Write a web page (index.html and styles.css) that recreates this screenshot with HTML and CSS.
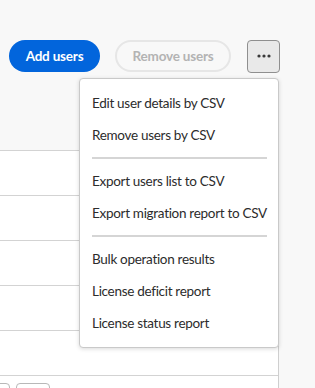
FILE: index.html
```html
<!DOCTYPE html>
<html>
<head>
  <title>Users</title>
  <link rel="stylesheet" href="styles.css">
</head>
<body>
  <div class="page">
    <!-- Toolbar -->
    <div class="toolbar">
      <button class="btn btn-primary">Add users</button>
      <button class="btn btn-secondary" disabled>Remove users</button>
      <button class="btn-more" aria-label="More actions">
        <svg width="14" height="4" viewBox="0 0 14 4"><circle cx="2" cy="2" r="1.6"/><circle cx="7" cy="2" r="1.6"/><circle cx="12" cy="2" r="1.6"/></svg>
      </button>
    </div>

    <!-- Users table -->
    <div class="table">
      <div class="table-row"></div>
      <div class="table-row"></div>
      <div class="table-row"></div>
      <div class="table-row"></div>
      <div class="table-row"></div>
      <div class="table-foot">
        <span class="page-box page-box-first"></span>
        <span class="page-box"></span>
      </div>
    </div>

    <!-- Actions menu -->
    <ul class="menu">
      <li class="menu-item">Edit user details by CSV</li>
      <li class="menu-item">Remove users by CSV</li>
      <li class="menu-divider"></li>
      <li class="menu-item">Export users list to CSV</li>
      <li class="menu-item">Export migration report to CSV</li>
      <li class="menu-divider"></li>
      <li class="menu-item">Bulk operation results</li>
      <li class="menu-item">License deficit report</li>
      <li class="menu-item">License status report</li>
    </ul>
  </div>
</body>
</html>
```

FILE: styles.css
```css
body {
  margin: 0;
  background: #f8f8f8;
  font-family: Lato, "Liberation Sans", sans-serif;
  color: #2c2c2c;
}

.page {
  position: relative;
  height: 388px;
  overflow: hidden;
}

.toolbar {
  display: flex;
  align-items: center;
  padding: 40px 0 0 9px;
  height: 32px;
}

.btn {
  height: 32px;
  padding: 0;
  border-radius: 16px;
  font-family: inherit;
  font-size: 13.5px;
  font-weight: bold;
  letter-spacing: -0.2px;
  white-space: nowrap;
  box-sizing: border-box;
}

.btn-primary {
  background: #0265dc;
  border: none;
  color: white;
  width: 91px;
}

.btn-secondary {
  margin-left: 15px;
  width: 116px;
  background: transparent;
  border: 2px solid #e6e6e6;
  color: #b3b3b3;
}

.btn-more {
  margin-left: 16px;
  width: 33px;
  height: 33px;
  display: flex;
  align-items: center;
  justify-content: center;
  background: #e9e9e9;
  border: 1px solid #8f8f8f;
  border-radius: 4px;
  box-sizing: border-box;
  padding: 0;
}

.btn-more svg {
  fill: #3a3a3a;
}

.table {
  width: 279px;
  margin-top: 78px;
  border-right: 1px solid #cfcfcf;
  box-sizing: border-box;
}

.table-row {
  height: 45px;
  background: white;
  border-top: 1px solid #d3d3d3;
  box-sizing: border-box;
}

.table-foot {
  display: flex;
  gap: 6px;
  height: 40px;
  padding-top: 7px;
  background: white;
  border-top: 1px solid #d3d3d3;
  box-sizing: border-box;
}

.page-box {
  width: 34px;
  height: 30px;
  border: 1px solid #b8b8b8;
  border-radius: 4px;
  box-sizing: border-box;
}

.page-box-first {
  margin-left: -24px;
}

.menu {
  position: absolute;
  left: 79px;
  top: 78px;
  width: 200px;
  margin: 0;
  padding: 8px 0;
  list-style: none;
  background: white;
  border: 1px solid #c9c9c9;
  border-radius: 4px;
  box-shadow: 0 1px 4px rgba(0, 0, 0, 0.15);
  box-sizing: border-box;
}

.menu-item {
  height: 32px;
  line-height: 32px;
  padding: 0 12px;
  font-size: 13.5px;
  letter-spacing: -0.3px;
  white-space: nowrap;
}

.menu-divider {
  height: 2px;
  margin: 6px 11px 6px 12px;
  background: #d5d5d5;
}
```
